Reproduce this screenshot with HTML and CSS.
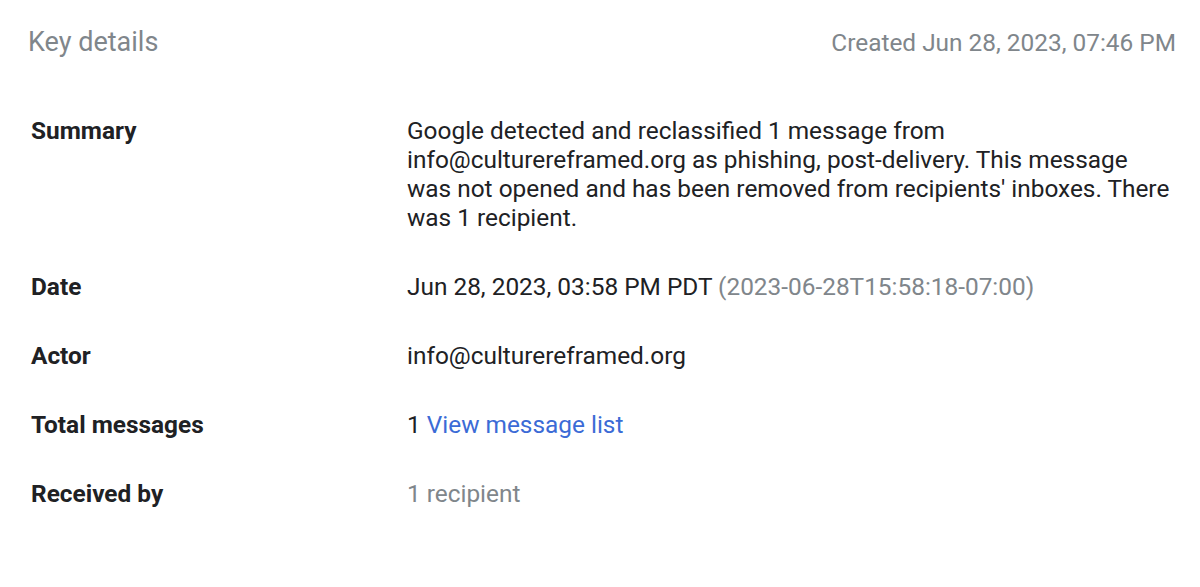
FILE: index.html
```html
<!DOCTYPE html>
<html lang="en">
<head>
    <meta charset="UTF-8">
    <meta name="viewport" content="width=device-width, initial-scale=1.0">
    <title>Key details</title>
    <link rel="stylesheet" href="styles.css">
</head>
<body>
    <div class="panel">
        <div class="panel-header">
            <h2 class="panel-title">Key details</h2>
            <div class="created">Created Jun 28, 2023, 07:46 PM</div>
        </div>

        <!-- Details list -->
        <div class="details">
            <div class="label">Summary</div>
            <div class="value">Google detected and reclassified 1 message from info@culturereframed.org as phishing, post-delivery. This message was not opened and has been removed from recipients' inboxes. There was 1 recipient.</div>

            <div class="label">Date</div>
            <div class="value">Jun 28, 2023, 03:58 PM PDT <span class="muted">(2023-06-28T15:58:18-07:00)</span></div>

            <div class="label">Actor</div>
            <div class="value">info@culturereframed.org</div>

            <div class="label">Total messages</div>
            <div class="value">1 <a href="#" class="link">View message list</a></div>

            <div class="label">Received by</div>
            <div class="value muted">1 recipient</div>
        </div>
    </div>
</body>
</html>
```

FILE: styles.css
```css
body {
    margin: 0;
    background-color: #fff;
    font-family: Roboto, "Liberation Sans", Arial, sans-serif;
    color: #202124;
}
.panel {
    padding: 26px 24px 0 28px;
}
.panel-header {
    display: flex;
    justify-content: space-between;
    align-items: center;
    height: 32px;
}
.panel-title {
    margin: 0;
    font-size: 27px;
    font-weight: 400;
    color: #80868b;
}
.created {
    font-size: 24.4px;
    color: #80868b;
}
.details {
    display: grid;
    grid-template-columns: 376px 1fr;
    row-gap: 40px;
    margin-top: 58px;
    padding-left: 3px;
    font-size: 24.4px;
    line-height: 29px;
}
.label {
    font-weight: 700;
}
.value {
    max-width: 775px;
}
.muted {
    color: #80868b;
}
.link {
    color: #3b6bd6;
    text-decoration: none;
}
```
